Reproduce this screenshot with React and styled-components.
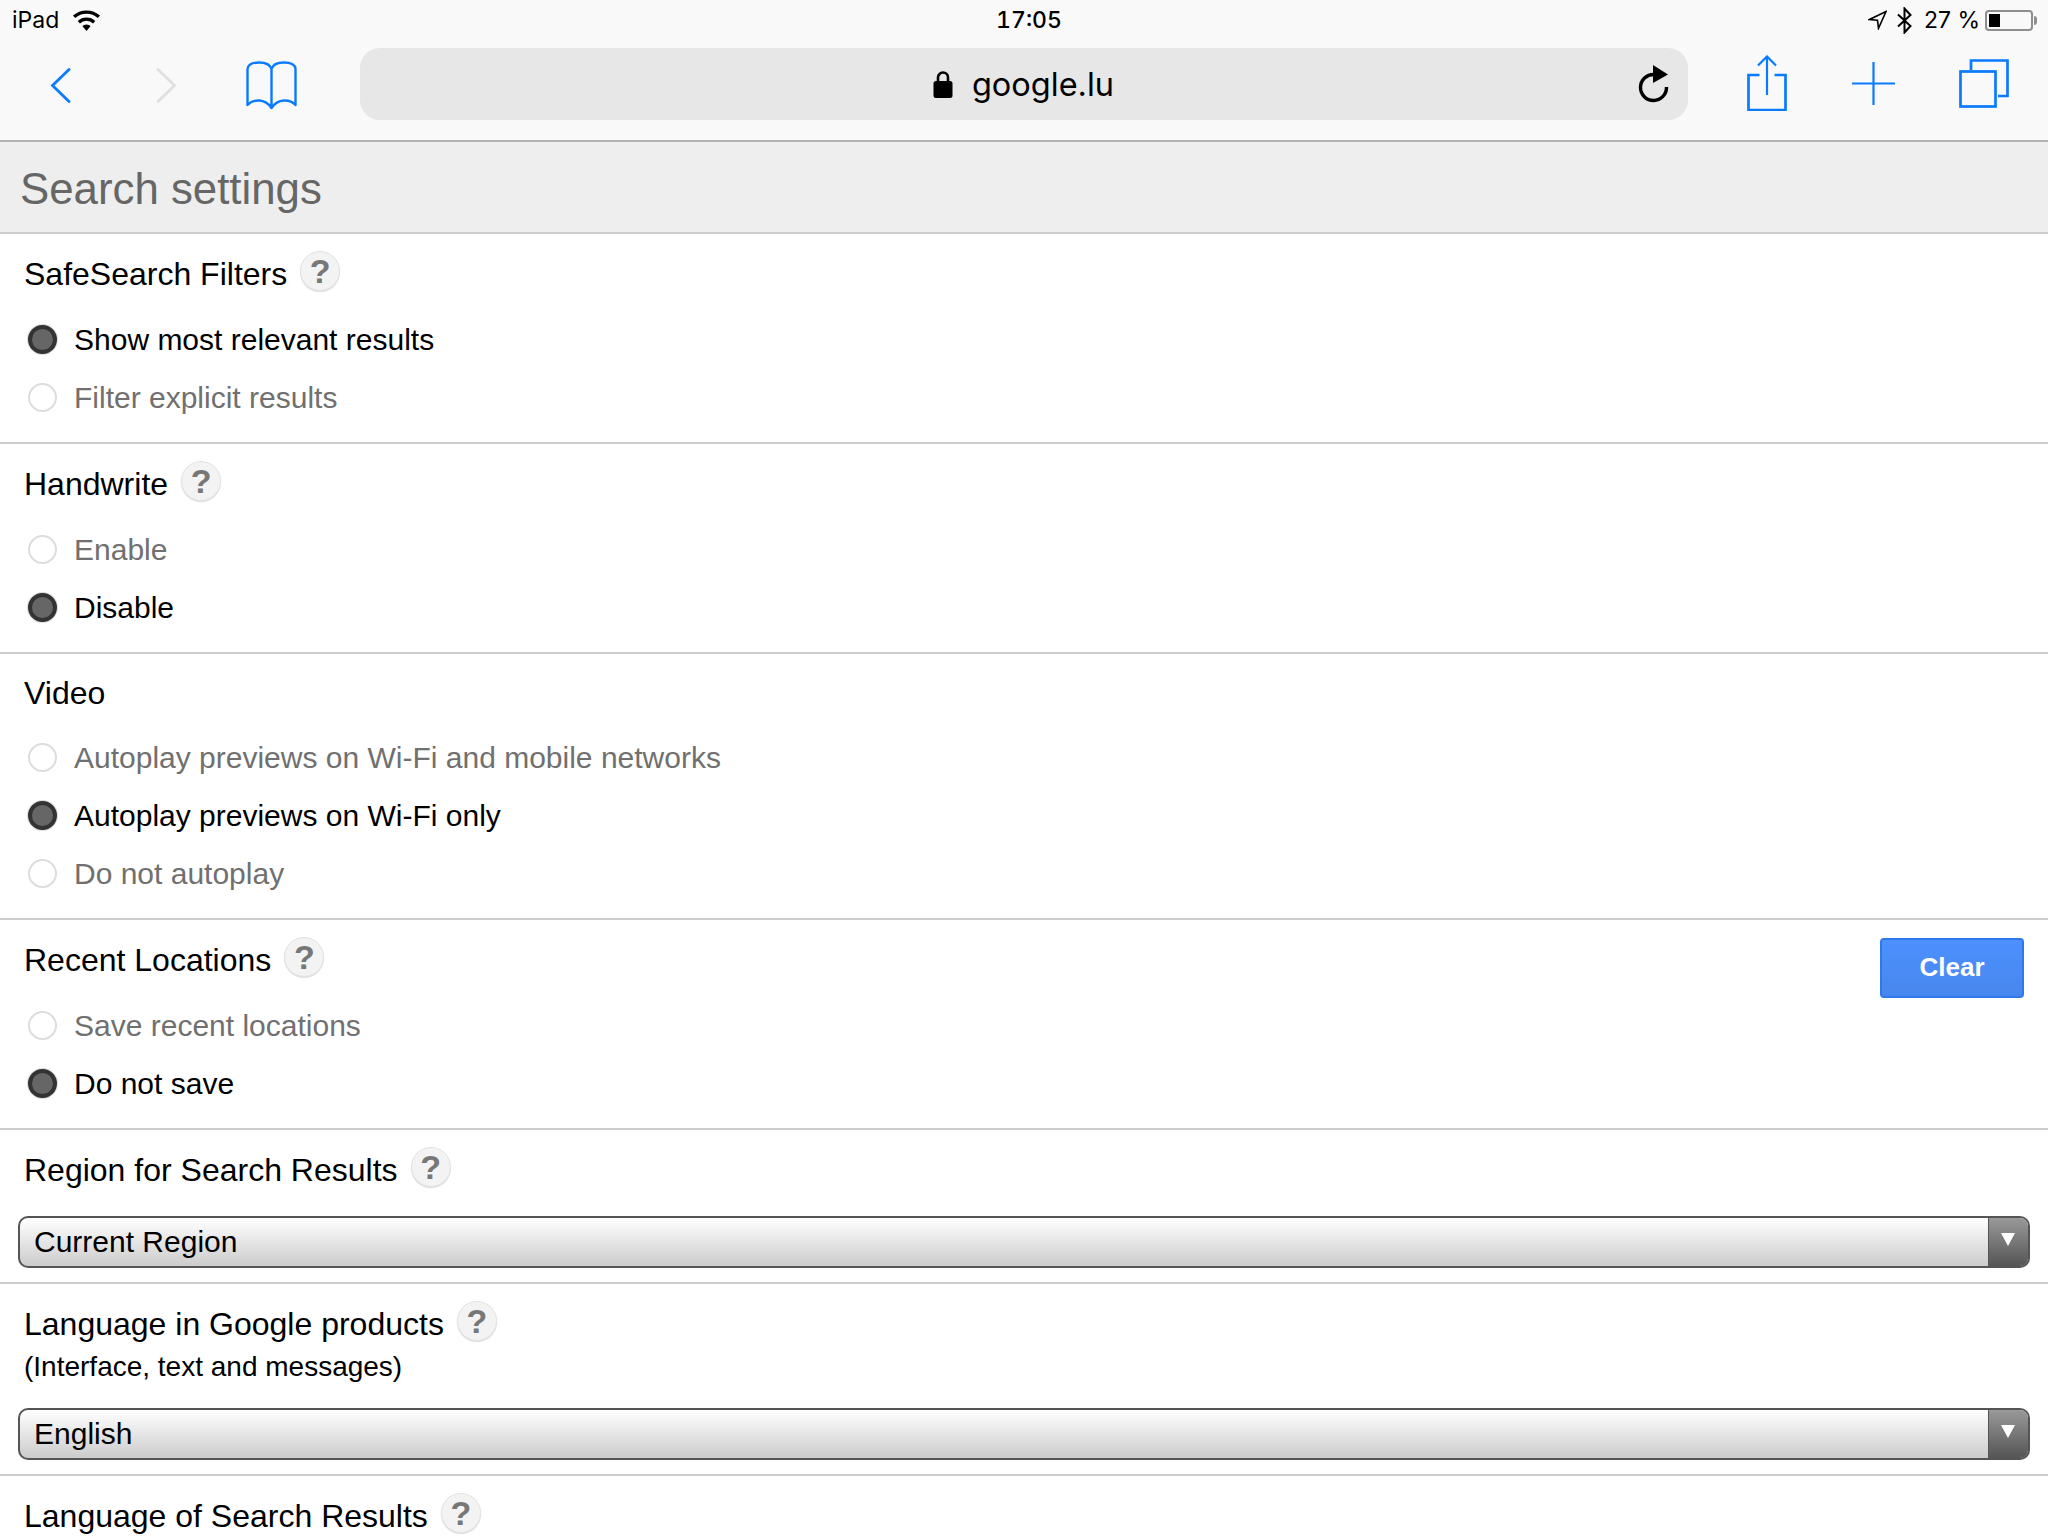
import React from 'react'
import styled, { createGlobalStyle } from 'styled-components'

const GlobalStyle = createGlobalStyle`
  html, body {
    margin: 0;
    padding: 0;
    background: #fff;
  }
  body {
    font-family: "Liberation Sans", Arial, sans-serif;
  }
`

const sections = [
  {
    title: 'SafeSearch Filters',
    help: true,
    options: [
      { label: 'Show most relevant results', checked: true },
      { label: 'Filter explicit results' },
    ],
  },
  {
    title: 'Handwrite',
    help: true,
    options: [{ label: 'Enable' }, { label: 'Disable', checked: true }],
  },
  {
    title: 'Video',
    options: [
      { label: 'Autoplay previews on Wi-Fi and mobile networks' },
      { label: 'Autoplay previews on Wi-Fi only', checked: true },
      { label: 'Do not autoplay' },
    ],
  },
  {
    title: 'Recent Locations',
    help: true,
    clear: true,
    options: [{ label: 'Save recent locations' }, { label: 'Do not save', checked: true }],
  },
  { title: 'Region for Search Results', help: true, select: 'Current Region' },
  {
    title: 'Language in Google products',
    help: true,
    note: '(Interface, text and messages)',
    select: 'English',
  },
  { title: 'Language of Search Results', help: true },
]

function WifiIcon() {
  return (
    <svg width="29" height="22" viewBox="0 0 28 21">
      <path d="M14 21l-4-4.6a6 6 0 0 1 8 0z" fill="#000" />
      <path d="M6.6 12.6a11 11 0 0 1 14.8 0" fill="none" stroke="#000" strokeWidth="3.2" />
      <path d="M2 7.4a18 18 0 0 1 24 0" fill="none" stroke="#000" strokeWidth="3.2" />
    </svg>
  )
}

function ArrowIcon() {
  return (
    <svg width="19" height="20" viewBox="0 0 19 20">
      <path d="M18 1.5L1.5 9.5l8 .8 1 8z" fill="none" stroke="#000" strokeWidth="1.6" strokeLinejoin="miter" />
    </svg>
  )
}

function BluetoothIcon() {
  return (
    <svg width="15" height="27" viewBox="0 0 15 27">
      <path d="M1 7.5l12.5 11.5-6 6.5V1.5l6 6.5L1 19.5" fill="none" stroke="#000" strokeWidth="2" />
    </svg>
  )
}

function BackIcon({ color }) {
  return (
    <svg width="21" height="35" viewBox="0 0 21 35">
      <path d="M19 1.5L2.5 17.500 19 33.500" fill="none" stroke={color} strokeWidth="2.8" strokeLinecap="round" />
    </svg>
  )
}

function ForwardIcon({ color }) {
  return (
    <svg width="21" height="35" viewBox="0 0 21 35">
      <path d="M2 1.5L18.500 17.500 2 33.500" fill="none" stroke={color} strokeWidth="2.8" strokeLinecap="round" />
    </svg>
  )
}

function BookIcon() {
  return (
    <svg width="51" height="49" viewBox="0 0 51 49">
      <path
        d="M25.500 8C24 3 19 1.500 13 1.500 8 1.500 2 3 1.500 8V44C7 38 19 37 25.500 47 32 37 44 38 49.500 44V8C49 3 43 1.500 38 1.500 32 1.500 27 3 25.500 8V47"
        fill="none"
        stroke="#0a7aff"
        strokeWidth="2.4"
        strokeLinejoin="round"
      />
    </svg>
  )
}

function LockIcon() {
  return (
    <svg width="20" height="28" viewBox="0 0 20 28">
      <path d="M5 12V7.500a5 5 0 0 1 10 0V12" fill="none" stroke="#000" strokeWidth="2.6" />
      <rect x="0.5" y="11" width="19" height="17" rx="2.5" fill="#000" />
    </svg>
  )
}

function ReloadIcon() {
  return (
    <svg width="31" height="38" viewBox="0 0 31 38">
      <path d="M16 9.500A13 13 0 1 0 28.500 22" fill="none" stroke="#000" strokeWidth="3.4" />
      <path d="M15 0l15 9.500L15 18z" fill="#000" />
    </svg>
  )
}

function ShareIcon() {
  return (
    <svg width="40" height="56" viewBox="0 0 40 56">
      <path d="M12.500 20H1.500v35h37V20H27.500" fill="none" stroke="#0a7aff" strokeWidth="2.7" />
      <path d="M20 2v38" fill="none" stroke="#0a7aff" strokeWidth="2.2" />
      <path d="M11 10.500L20 1.500l9 9" fill="none" stroke="#0a7aff" strokeWidth="2.2" />
    </svg>
  )
}

function PlusIcon() {
  return (
    <svg width="43" height="43" viewBox="0 0 43 43">
      <path d="M21.500 0v43M0 21.500h43" fill="none" stroke="#0a7aff" strokeWidth="2.2" />
    </svg>
  )
}

function TabsIcon() {
  return (
    <svg width="50" height="49" viewBox="0 0 50 49">
      <rect x="1.5" y="12.5" width="35" height="35" fill="none" stroke="#0a7aff" strokeWidth="2.7" />
      <path d="M12 11V1.500h36.500V37H39" fill="none" stroke="#0a7aff" strokeWidth="2.7" />
    </svg>
  )
}

function Section({ title, help, clear, note, options, select }) {
  return (
    <SectionBox>
      <TitleRow $help={help}>
        <Title>{title}</Title>
        {help && <Help>?</Help>}
        {clear && <ClearButton>Clear</ClearButton>}
      </TitleRow>
      {note && <Note>{note}</Note>}
      {options && (
        <Options>
          {options.map((o) => (
            <Option key={o.label} $checked={o.checked}>
              <Radio $checked={o.checked} />
              <OptionLabel>{o.label}</OptionLabel>
            </Option>
          ))}
        </Options>
      )}
      {select && (
        <SelectBox>
          <SelectValue>{select}</SelectValue>
          <SelectArrow />
        </SelectBox>
      )}
    </SectionBox>
  )
}

export default function App() {
  return (
    <Page>
      <GlobalStyle />
      <Chrome>
        <StatusBar>
          <StatusLeft>
            iPad
            <WifiIcon />
          </StatusLeft>
          <Clock>17:05</Clock>
          <StatusRight>
            <ArrowIcon />
            <BluetoothIcon />
            <Percent>27 %</Percent>
            <Battery>
              <BatteryLevel />
            </Battery>
          </StatusRight>
        </StatusBar>
        <NavBar>
          <NavGroup>
            <BackIcon color="#0a7aff" />
            <ForwardIcon color="#e0e0e0" />
            <BookIcon />
          </NavGroup>
          <AddressBar>
            <Address>
              <LockIcon />
              google.lu
            </Address>
            <ReloadSlot>
              <ReloadIcon />
            </ReloadSlot>
          </AddressBar>
          <ActionGroup>
            <ShareIcon />
            <PlusIcon />
            <TabsIcon />
          </ActionGroup>
        </NavBar>
      </Chrome>
      <Header>Search settings</Header>
      {sections.map((s) => (
        <Section key={s.title} {...s} />
      ))}
    </Page>
  )
}

const Page = styled.div`
  width: 2048px;
  height: 1536px;
  overflow: hidden;
  background: #fff;
  color: #000;
`

const Chrome = styled.div`
  background: #f9f9f9;
  border-bottom: 2px solid #b2b2b2;
  box-sizing: border-box;
  height: 142px;
`

const StatusBar = styled.div`
  height: 40px;
  padding: 0 15px 0 12px;
  display: grid;
  grid-template-columns: 1fr auto 1fr;
  align-items: center;
  font-family: Inter, "Liberation Sans", sans-serif;
  font-size: 23px;
`

const StatusLeft = styled.div`
  display: flex;
  align-items: center;
  gap: 13px;
`

const Clock = styled.div`
  font-weight: 500;
  font-size: 23px;
  font-variant-numeric: tabular-nums;
  margin-left: 13px;
`

const StatusRight = styled.div`
  display: flex;
  align-items: center;
  justify-content: flex-end;
  gap: 10px;
`

const Percent = styled.span`
  margin: 0 -2px 0 2px;
`

const Battery = styled.div`
  width: 48px;
  height: 21px;
  box-sizing: border-box;
  border: 2px solid #8e8e8e;
  border-radius: 4px;
  padding: 2px;
  margin-left: -3px;
  position: relative;
  &::after {
    content: '';
    position: absolute;
    right: -6px;
    top: 4px;
    width: 3px;
    height: 9px;
    background: #8e8e8e;
    border-radius: 0 3px 3px 0;
  }
`

const BatteryLevel = styled.div`
  width: 11px;
  height: 100%;
  background: #000;
`

const NavBar = styled.div`
  height: 100px;
  display: flex;
  align-items: center;
  padding-bottom: 12px;
  box-sizing: border-box;
  padding-left: 50px;
`

const NavGroup = styled.div`
  width: 310px;
  margin-top: 2px;
  display: flex;
  align-items: center;
  gap: 85px;
  & > svg:nth-child(3) {
    margin-left: -16px;
  }
`

const AddressBar = styled.div`
  width: 1328px;
  height: 72px;
  background: #e7e7e7;
  border-radius: 20px;
  display: flex;
  align-items: center;
  justify-content: center;
  position: relative;
`

const Address = styled.div`
  display: flex;
  align-items: center;
  gap: 19px;
  font-family: Inter, "Liberation Sans", sans-serif;
  font-size: 32.5px;
  margin-left: -1px;
`

const ReloadSlot = styled.div`
  position: absolute;
  right: 19px;
  top: 17px;
`

const ActionGroup = styled.div`
  margin: -2px 0 0 59px;
  display: flex;
  align-items: center;
  gap: 65px;
  & > svg:nth-child(3) {
    margin-left: -1px;
  }
`

const Header = styled.div`
  height: 92px;
  box-sizing: border-box;
  padding: 3px 0 0 20px;
  background: #eee;
  border-bottom: 2px solid #ccc;
  color: #666;
  font-size: 43.8px;
  line-height: 88px;
`

const SectionBox = styled.section`
  box-sizing: border-box;
  padding: 16px 24px 16px 24px;
  border-bottom: 2px solid #ccc;
`

const TitleRow = styled.div`
  display: flex;
  align-items: center;
  gap: 13px;
  height: ${(p) => (p.$help ? '47px' : '45px')};
`

const Title = styled.div`
  font-size: 32px;
  line-height: 46px;
  margin-top: 1px;
`

const Help = styled.span`
  width: 40px;
  height: 40px;
  box-sizing: border-box;
  margin-top: -5px;
  border-radius: 50%;
  background: #f3f3f3;
  border: 1px solid #e3e3e3;
  box-shadow: 0 1px 1px #ddd;
  color: #777;
  font-size: 34px;
  font-weight: bold;
  text-align: center;
  line-height: 38px;
`

const ClearButton = styled.button`
  margin: 3px 0 -14px auto;
  width: 144px;
  height: 60px;
  box-sizing: border-box;
  padding: 0 0 2px;
  border: 2px solid #3079ed;
  border-radius: 4px;
  background: linear-gradient(#4d90fe, #4787ed);
  color: #fff;
  font-family: "Liberation Sans", Arial, sans-serif;
  font-size: 26px;
  font-weight: bold;
`

const Note = styled.div`
  font-size: 28px;
  line-height: 34px;
  margin-top: 3px;
  padding-bottom: 1px;
`

const Options = styled.div`
  margin-top: 13px;
`

const Option = styled.div`
  display: flex;
  align-items: center;
  gap: 17px;
  height: 58px;
  font-size: 30px;
  color: ${(p) => (p.$checked ? '#000' : '#707070')};
`

const OptionLabel = styled.span`
  margin-top: 2px;
`

const Radio = styled.span`
  width: 29px;
  height: 29px;
  margin-left: 4px;
  box-sizing: border-box;
  border-radius: 50%;
  background: ${(p) => (p.$checked ? '#666' : '#fff')};
  border: ${(p) => (p.$checked ? '4px solid #333' : '2px solid #ddd')};
  box-shadow: ${(p) => (p.$checked ? '0 0 0 1px #ddd' : 'none')};
`

const SelectBox = styled.div`
  margin: 23px 0 -2px -6px;
  width: 2012px;
  height: 52px;
  box-sizing: border-box;
  display: flex;
  border: 2px solid #555;
  border-radius: 10px;
  overflow: hidden;
  background: linear-gradient(#fff, #ccc);
`

const SelectValue = styled.div`
  flex: 1;
  padding-left: 14px;
  font-size: 30px;
  line-height: 48px;
`

const SelectArrow = styled.div`
  width: 40px;
  background: linear-gradient(#999, #555);
  border-left: 1px solid #555;
  display: flex;
  justify-content: center;
  padding: 15px 2px 0 0;
  box-sizing: border-box;
  &::after {
    content: '';
    width: 0;
    height: 0;
    border-left: 7px solid transparent;
    border-right: 7px solid transparent;
    border-top: 13px solid #fff;
  }
`
